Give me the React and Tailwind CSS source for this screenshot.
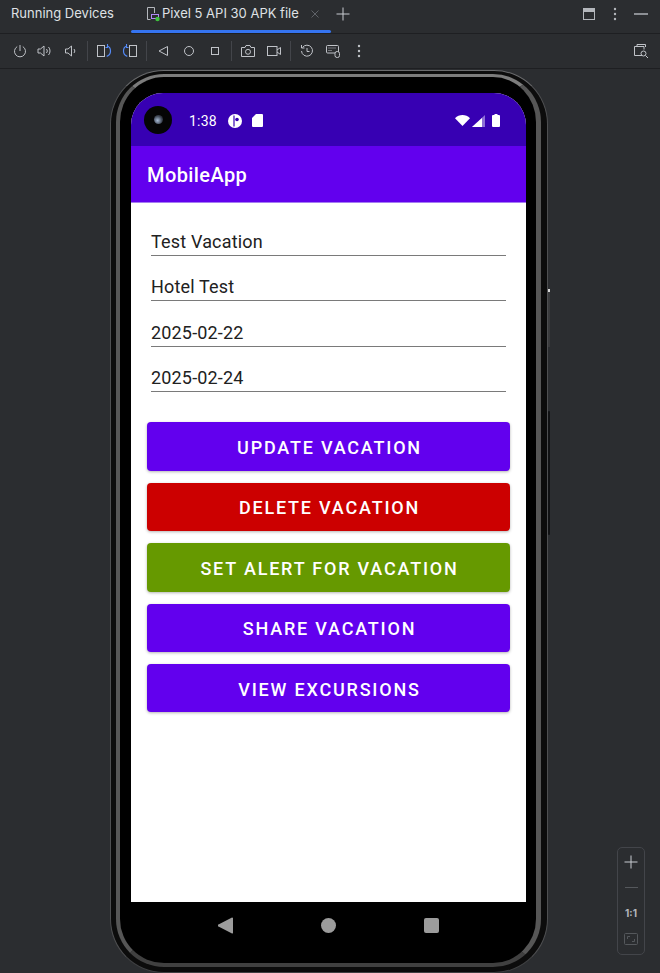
import React from 'react';

const fields = ['Test Vacation', 'Hotel Test', '2025-02-22', '2025-02-24'];

const actions = [
    { label: 'UPDATE VACATION', color: 'bg-[#6200ee]' },
    { label: 'DELETE VACATION', color: 'bg-[#cc0000]' },
    { label: 'SET ALERT FOR VACATION', color: 'bg-[#669900]' },
    { label: 'SHARE VACATION', color: 'bg-[#6200ee]' },
    { label: 'VIEW EXCURSIONS', color: 'bg-[#6200ee]' },
];

function Icon({ children, className = '' }) {
    return (
        <svg className={`w-4 h-4 ${className}`} viewBox="0 0 16 16" fill="none" stroke="currentColor" strokeWidth="1">
            {children}
        </svg>
    );
}

function ToolButton({ wide = true, children }) {
    return <div className={`${wide ? 'w-[26px]' : 'w-[25px]'} h-full flex items-center justify-center text-[#c0c3c8]`}>{children}</div>;
}

function Separator() {
    return <div className="w-px h-5 ml-[3px] mr-[3px] bg-[#43454a]"></div>;
}

function Toolbar() {
    return (
        <div className="h-[35px] pl-[7px] pr-[11px] flex items-center border-b border-[#1e1f22]">
            <ToolButton wide={false}>
                <Icon><path d="M5.200 3.600a5.500 5.500 0 1 0 5.600 0" /><path d="M8 2v6" /></Icon>
            </ToolButton>
            <ToolButton wide={false}>
                <Icon><path d="M1 6v4h2.500L7 13V3L3.500 6z" /><path d="M9.500 6a3 3 0 0 1 0 4M11.500 4a6 6 0 0 1 0 8" /></Icon>
            </ToolButton>
            <ToolButton wide={false}>
                <Icon><path d="M3.500 6v4H6l3.500 3V3L6 6z" /><path d="M12 6a3 3 0 0 1 0 4" /></Icon>
            </ToolButton>
            <div className="w-px h-5 ml-[5px] mr-[3px] bg-[#43454a]"></div>
            <ToolButton>
                <Icon>
                    <rect x="1.500" y="2.500" width="7" height="11" />
                    <path d="M11 3c2.500.6 3.500 2.500 3.500 5s-1.200 4.600-3.800 5.300" stroke="#548af7" strokeWidth="1.200" />
                    <path d="M11.500 1v3.500h-2" stroke="#548af7" strokeWidth="1.100" />
                </Icon>
            </ToolButton>
            <ToolButton>
                <Icon>
                    <rect x="7.500" y="2.500" width="7" height="11" />
                    <path d="M5 3C2.500 3.600 1.500 5.500 1.500 8s1.200 4.600 3.800 5.300" stroke="#548af7" strokeWidth="1.200" />
                    <path d="M4.500 1v3.500h2" stroke="#548af7" strokeWidth="1.100" />
                </Icon>
            </ToolButton>
            <Separator />
            <ToolButton><Icon><path d="M12.500 3.500v9L4 8z" /></Icon></ToolButton>
            <ToolButton><Icon><circle cx="8" cy="8" r="4.500" /></Icon></ToolButton>
            <ToolButton><Icon><rect x="4.500" y="4.500" width="7" height="7" /></Icon></ToolButton>
            <Separator />
            <ToolButton>
                <Icon>
                    <path d="M1.500 4.500h3.500l1-2h4l1 2h3.500v9h-13z" />
                    <circle cx="8" cy="8.800" r="2.500" />
                </Icon>
            </ToolButton>
            <ToolButton>
                <Icon>
                    <rect x="1.500" y="3.500" width="9.500" height="9" />
                    <path d="M11 7l3.500-2.500v7L11 9" />
                </Icon>
            </ToolButton>
            <Separator />
            <ToolButton>
                <Icon>
                    <path d="M3.500 4.500A5.500 5.500 0 1 1 2.500 8" />
                    <path d="M2.500 2v3h3" />
                    <path d="M8 5v3.500h2.500" />
                </Icon>
            </ToolButton>
            <ToolButton>
                <Icon>
                    <rect x="1.500" y="2.500" width="12" height="7.500" rx="1" />
                    <path d="M3.500 5h8M3.500 7.500h4" strokeDasharray="1 1" />
                    <rect x="10" y="8.500" width="4.500" height="6" rx="2" fill="#2b2d30" />
                </Icon>
            </ToolButton>
            <ToolButton><ThreeDots /></ToolButton>
            <div className="ml-auto">
                <Icon className="text-[#c0c3c8]">
                    <path d="M4 3V1.500h8.500V4" />
                    <path d="M9 12.500H1.500V3.500h9.500V6.500" />
                    <circle cx="10.500" cy="10.500" r="2.500" />
                    <path d="M12.500 12.500l2.500 2.500" />
                </Icon>
            </div>
        </div>
    );
}

function ThreeDots() {
    return (
        <svg className="w-4 h-4" viewBox="0 0 16 16" fill="currentColor">
            <circle cx="8" cy="3" r="1.200" />
            <circle cx="8" cy="8" r="1.200" />
            <circle cx="8" cy="13" r="1.200" />
        </svg>
    );
}

function TopBar() {
    return (
        <div className="relative h-[34px] pb-[6px] flex items-center border-b border-[#1e1f22] text-[13px]">
            <span className="ml-[11px] text-[#dfe1e5]">Running Devices</span>
            <div className="ml-[31px] flex items-center">
                <svg className="w-4 h-4 text-[#b4b7bc]" viewBox="0 0 16 16" fill="none" stroke="currentColor">
                    <path d="M9.500 7V1.500h-7v12h3" />
                    <rect x="6.500" y="8.500" width="7" height="4" stroke="#b189f5" />
                    <circle cx="12.500" cy="13" r="2.200" fill="#3ec23e" stroke="none" />
                </svg>
                <span className="ml-px text-[#dfe1e5]">Pixel 5 API 30 APK file</span>
                <svg className="ml-[11px] w-[10px] h-[10px] text-[#5f6268]" viewBox="0 0 10 10" stroke="currentColor">
                    <path d="M1.500 1.500l7 7M8.500 1.500l-7 7" />
                </svg>
                <svg className="ml-[16px] w-[14px] h-[14px] text-[#c9ccd1]" viewBox="0 0 14 14" stroke="currentColor">
                    <path d="M7 0.500v13M0.500 7h13" />
                </svg>
            </div>
            <div className="absolute left-[131px] bottom-0 w-[200px] h-[3px] rounded-full bg-[#3574f0]"></div>
            <div className="ml-auto flex items-center pr-[12px] text-[#b4b7bc]">
                <svg className="w-[12px] h-[12px]" viewBox="0 0 12 12" fill="none" stroke="currentColor">
                    <rect x="0.500" y="0.500" width="11" height="11" />
                    <rect x="0" y="0" width="12" height="4" fill="currentColor" stroke="none" />
                </svg>
                <div className="ml-[12px]"><ThreeDots /></div>
                <div className="ml-[11px] w-[14px] h-[2px] bg-[#8c8f94]"></div>
            </div>
        </div>
    );
}

function StatusBar() {
    return (
        <div className="h-[53px] shrink-0 bg-[#3700b3] flex items-center text-white">
            <div className="ml-[13px] w-[28px] h-[28px] rounded-full bg-[#050505] flex items-center justify-center">
                <div className="w-[9px] h-[9px] rounded-full bg-[radial-gradient(circle_at_40%_60%,#a9bdd6,#39404d_60%,#16181c)]"></div>
            </div>
            <span className="ml-[17px] mt-[3px] text-[14px] tracking-[0.2px]">1:38</span>
            <svg className="ml-[11px] mt-[3px] w-[14px] h-[14px]" viewBox="0 0 14 14">
                <circle cx="7" cy="7" r="7" fill="white" />
                <path d="M6 1.500v11" stroke="#3700b3" strokeWidth="1.200" />
                <circle cx="9" cy="5.500" r="1.800" fill="#3700b3" />
            </svg>
            <svg className="ml-[10px] mt-[2px] w-[11px] h-[13px]" viewBox="0 0 11 13" fill="white">
                <path d="M4 0h6a1 1 0 0 1 1 1v11a1 1 0 0 1-1 1H1a1 1 0 0 1-1-1V4z" />
            </svg>
            <div className="ml-auto mt-[2px] mr-[26px] flex items-center">
                <svg className="w-[15px] h-[11px]" viewBox="0 0 15 11" fill="white">
                    <path d="M0 3.200C4-1 11-1 15 3.200L7.500 11z" />
                </svg>
                <svg className="ml-[2px] w-[13px] h-[12px]" viewBox="0 0 13 12">
                    <path d="M13 0v12H0z" fill="#8d6fd6" />
                    <path d="M10 3v9H0z" fill="white" />
                </svg>
                <svg className="ml-[7px] w-[8px] h-[13px]" viewBox="0 0 8 13" fill="white">
                    <path d="M2.500 0h3v1H7a1 1 0 0 1 1 1v10a1 1 0 0 1-1 1H1a1 1 0 0 1-1-1V2a1 1 0 0 1 1-1h1.500z" />
                </svg>
            </div>
        </div>
    );
}

function Screen() {
    return (
        <div className="w-[395px] h-[809px] rounded-t-[32px] overflow-hidden bg-white flex flex-col font-['Roboto',sans-serif]">
            <StatusBar />
            <div className="h-[57px] shrink-0 pt-px bg-[#6200ee] border-b border-[#a57cf2] flex items-center pl-4 text-white text-[20px] font-medium tracking-[0.4px]">
                MobileApp
            </div>
            <div className="px-4 pt-[7.6px]">
                <div className="px-1">
                    {fields.map((value) => (
                        <div key={value} className="h-[45.4px] flex items-end pb-[1px] border-b border-[#7a7a7a] text-[18px] leading-[24px] tracking-[0.17px] text-[#212121]">
                            {value}
                        </div>
                    ))}
                </div>
                <div className="mt-[30.2px] flex flex-col gap-[12px]">
                    {actions.map((action) => (
                        <button key={action.label} className={`h-[48.4px] pt-[2px] pl-[2px] rounded-[4px] shadow-[0_1px_3px_rgba(0,0,0,0.3)] text-white text-[18px] font-medium tracking-[1.800px] ${action.color}`}>
                            {action.label}
                        </button>
                    ))}
                </div>
            </div>
        </div>
    );
}

function NavBar() {
    return (
        <div className="w-[395px] h-[61px] flex items-center justify-center gap-[88px] pb-[15px]">
            <svg className="w-[15px] h-[17px] -ml-px" viewBox="0 0 15 17" fill="#9c9c9c">
                <path d="M14 0.500a1 1 0 0 1 1 .500v15a1 1 0 0 1-1 .500L0.500 9.500a1 1 0 0 1 0-2z" />
            </svg>
            <div className="w-[15px] h-[15px] rounded-full bg-[#9c9c9c]"></div>
            <div className="w-[15px] h-[15px] rounded-[2px] bg-[#9c9c9c]"></div>
        </div>
    );
}

function Phone() {
    return (
        <div className="relative w-[438px] h-[903px] ml-[110px] rounded-[54px] border border-t-[#6a6b6d] border-x-[#4e4f51] border-b-[#3f4042] bg-[#0c0c0c] pt-[3px] pl-[5px] pr-[6px] pb-[5px]">
            <div className="h-full rounded-[48px] border-[4px] border-t-[3px] border-r-[5px] border-t-[#7c7c7c] border-x-[#565656] border-b-[#404040] bg-black pt-[16px] pl-[11px]">
                <Screen />
                <NavBar />
            </div>
            <div className="absolute -right-[3px] top-[218px] w-[2px] h-[58px] bg-[#3a3b3d]">
                <div className="w-[2px] h-[3px] bg-[#d8d8d8]"></div>
            </div>
            <div className="absolute -right-[3px] top-[340px] w-[2px] h-[124px] rounded-full bg-[#111214]"></div>
        </div>
    );
}

function ZoomControls() {
    return (
        <div className="absolute left-[617px] top-[847px] w-[28px] h-[108px] rounded-[5px] border border-[#43454a] flex flex-col items-center pt-[7px] text-[#c9ccd1]">
            <svg className="w-[14px] h-[14px]" viewBox="0 0 14 14" stroke="currentColor">
                <path d="M7 0.500v13M0.500 7h13" />
            </svg>
            <div className="mt-[18px] w-[13px] h-px bg-[#55585c]"></div>
            <span className="mt-[18px] text-[10px] leading-[14px] font-bold text-[#b4b7bc]">1:1</span>
            <svg className="mt-[13px] w-[14px] h-[12px] text-[#55585c]" viewBox="0 0 14 12" fill="none" stroke="currentColor">
                <rect x="0.500" y="0.500" width="13" height="11" rx="1" />
                <path d="M3.500 6V3.500H6M10.500 6v2.500H8" />
            </svg>
        </div>
    );
}

export default function App() {
    return (
        <div className="relative w-[660px] h-[973px] overflow-hidden bg-[#2b2d30] font-['Inter',sans-serif]">
            <TopBar />
            <Toolbar />
            <div className="pt-px">
                <Phone />
            </div>
            <ZoomControls />
        </div>
    );
}
